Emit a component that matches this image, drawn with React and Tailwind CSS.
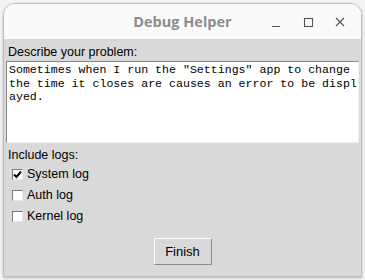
import React from 'react';

const ui = { fontFamily: '"Liberation Sans", Arial, sans-serif' };
const mono = { fontFamily: '"Liberation Mono", "Courier New", monospace' };

const Check = ({ checked, label }) => (
  <div className="flex items-center h-[21px] pl-[6px]">
    <div className="w-[11px] h-[11px] bg-white border border-t-[#7a7a7a] border-l-[#7a7a7a] border-b-[#e8e8e8] border-r-[#e8e8e8] flex items-center justify-center">
      {checked && (
        <svg width="9" height="9" viewBox="0 0 9 9">
          <path d="M1 4.5 L3.5 7 L8 1.5" fill="none" stroke="#000" strokeWidth="2" />
        </svg>
      )}
    </div>
    <span className="ml-[4px] text-[12.5px] text-black" style={ui}>{label}</span>
  </div>
);

export default function App() {
  return (
    <div className="w-[365px] h-[280px] bg-[#f4f4f4] pt-[3px] px-[3px]">
      <div className="w-[359px] h-[274px] rounded-t-[12px] border border-[#bdbdbd] shadow-[0_1px_3px_rgba(0,0,0,0.25)] overflow-hidden flex flex-col">
        {/* title bar */}
        <div className="h-[35px] bg-[#fafafa] relative flex items-center justify-center">
          <span className="text-[14.5px] font-bold text-[#8c8c8c]" style={{ fontFamily: '"Open Sans", "Noto Sans", sans-serif' }}>Debug Helper</span>
          <div className="absolute right-[15px] top-0 h-full flex items-center gap-[20px] text-[#555]">
            <svg width="12" height="12" viewBox="0 0 12 12"><path d="M2 10.5 H10" stroke="#555" strokeWidth="1.2" /></svg>
            <svg width="12" height="12" viewBox="0 0 12 12"><rect x="2.5" y="2.5" width="8" height="8" fill="none" stroke="#555" strokeWidth="1.1" /></svg>
            <svg width="12" height="12" viewBox="0 0 12 12"><path d="M2 2 L10 10 M10 2 L2 10" stroke="#555" strokeWidth="1.2" /></svg>
          </div>
        </div>
        {/* content */}
        <div className="flex-1 bg-[#d9d9d9] flex flex-col px-[2px]" style={ui}>
          <div className="text-[12.5px] text-black pl-[2px] pt-[4px] h-[22px]">Describe your problem:</div>
          <div className="h-[82px] bg-white border border-t-[#8a8a8a] border-l-[#8a8a8a] border-b-[#f2f2f2] border-r-[#f2f2f2] px-[2px] pt-[1px]">
            <div className="text-[11.6px] leading-[13.7px] text-black whitespace-pre" style={mono}>
              {'Sometimes when I run the "Settings" app to change\nthe time it closes are causes an error to be displ\nayed.'}
            </div>
          </div>
          <div className="text-[12.5px] text-black pl-[2px] pt-[3px] h-[21px]">Include logs:</div>
          <Check checked label="System log" />
          <Check label="Auth log" />
          <Check label="Kernel log" />
          <div className="flex justify-center mt-[11px]">
            <div className="w-[58px] h-[27px] bg-[#d9d9d9] border border-t-white border-l-white border-b-[#8a8a8a] border-r-[#8a8a8a] flex items-center justify-center text-[13px] text-black">
              Finish
            </div>
          </div>
        </div>
      </div>
    </div>
  );
}
